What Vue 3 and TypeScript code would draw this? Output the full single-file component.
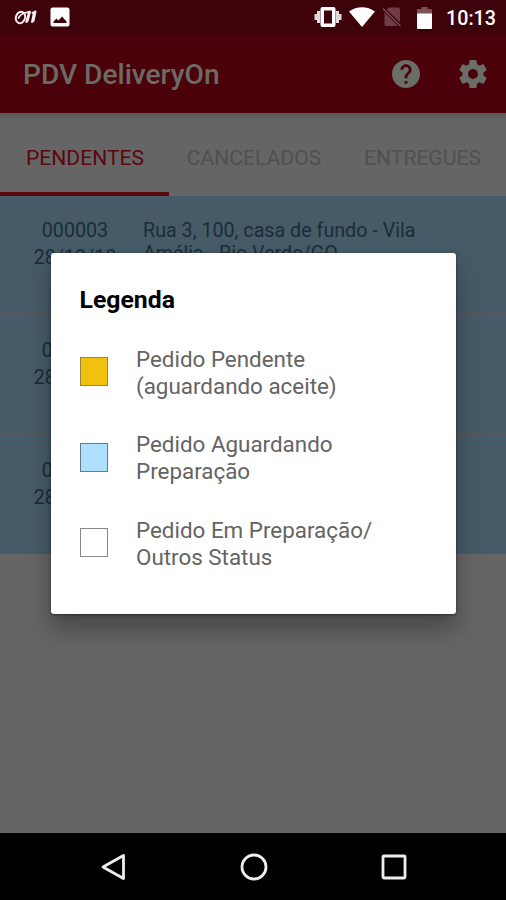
<script setup lang="ts">
interface Order { code: string; date: string; address: string }
interface LegendItem { tone: string; lines: string[] }

const tabs = ['PENDENTES', 'CANCELADOS', 'ENTREGUES']
const activeTab = 'PENDENTES'

const orders: Order[] = [
  { code: '000003', date: '28/12/18', address: 'Rua 3, 100, casa de fundo - Vila Amélia - Rio Verde/GO' },
  { code: '000002', date: '28/12/18', address: '' },
  { code: '000001', date: '28/12/18', address: '' },
]

const legend: LegendItem[] = [
  { tone: 'pending', lines: ['Pedido Pendente', '(aguardando aceite)'] },
  { tone: 'waiting', lines: ['Pedido Aguardando', 'Preparação'] },
  { tone: 'other', lines: ['Pedido Em Preparação/', 'Outros Status'] },
]
</script>

<template>
  <div class="screen">
    <div class="status">
      <svg class="brand" viewBox="0 0 24 18" fill="none" stroke="#f4eeee" stroke-width="2" stroke-linecap="round" stroke-linejoin="round">
        <ellipse cx="6.500" cy="9.500" rx="4.600" ry="5.800" transform="rotate(22 6.500 9.500)" />
        <path d="M4.500 10c1.500-3 4-4.500 7-5.500" stroke-width="1.700" />
        <path d="M12.300 14l2.700-9.500M13 4.500l3-.8-2.500 9.500M18 14l2-9.500M18.500 5l3-1.500-2 9.500" />
      </svg>
      <svg class="photo" viewBox="0 0 20 20">
        <rect x=".5" y=".5" width="19" height="19" rx="2" fill="#fff" />
        <path d="M3.500 16v-1.500l3-3 2 2 3.500-4 4.500 5V16z" fill="#3c020a" />
      </svg>
      <span class="grow"></span>
      <svg class="vibrate" viewBox="0 0 28 20" fill="#fff">
        <path fill-rule="evenodd" d="M8.500 0h11a2 2 0 0 1 2 2v16a2 2 0 0 1-2 2h-11a2 2 0 0 1-2-2V2a2 2 0 0 1 2-2zM10 3.500v13h8v-13z" />
        <path d="M3 4h3.200v12H3zM.5 7h2.700v6H.5zM21.800 4H25v12h-3.200zM24.800 7h2.700v6h-2.700z" opacity=".85" />
      </svg>
      <svg class="wifi" viewBox="0 0 26 20"><path d="M0 4.500C7.500-1.300 18.500-1.300 26 4.500L13 20z" fill="#fff" /></svg>
      <svg class="sim" viewBox="0 0 20 20">
        <path d="M7 .5h9.500a1.500 1.500 0 0 1 1.500 1.500v13.500L4.500 2.500zM2.500 5L16 19H4a1.500 1.500 0 0 1-1.500-1.500z" fill="#6f3c44" />
        <path d="M1 1.500l17.500 17.500" stroke="#7c4a51" stroke-width="1.500" />
      </svg>
      <svg class="battery" viewBox="0 0 15 22">
        <path d="M4.500 0h6v2H14a1 1 0 0 1 1 1v4H0V3a1 1 0 0 1 1-1h3.500z" fill="#805057" />
        <path d="M0 6.500h15V21a1 1 0 0 1-1 1H1a1 1 0 0 1-1-1z" fill="#fff" />
      </svg>
      <span class="clock">10:13</span>
    </div>

    <header class="bar">
      <h1>PDV DeliveryOn</h1>
      <svg class="help" viewBox="2 2 20 20" fill="#6b6d67">
        <path d="M12 2C6.480 2 2 6.480 2 12s4.480 10 10 10 10-4.480 10-10S17.520 2 12 2zm1 17h-2v-2h2v2zm2.070-7.750l-.9.920C13.450 12.900 13 13.500 13 15h-2v-.5c0-1.100.45-2.100 1.170-2.830l1.240-1.260c.37-.36.590-.86.590-1.410 0-1.100-.9-2-2-2s-2 .9-2 2H8c0-2.210 1.790-4 4-4s4 1.790 4 4c0 .88-.36 1.680-.93 2.250z" />
      </svg>
      <svg class="gear" viewBox="2 2 20 20" fill="#6b6d67">
        <path d="M19.430 12.980c.04-.32.070-.64.070-.98s-.03-.66-.07-.98l2.110-1.650c.19-.15.240-.42.120-.64l-2-3.460c-.12-.22-.39-.3-.61-.22l-2.490 1c-.52-.4-1.080-.73-1.690-.98l-.38-2.650C14.460 2.180 14.250 2 14 2h-4c-.25 0-.46.180-.49.420l-.38 2.650c-.61.250-1.170.590-1.690.98l-2.490-1c-.23-.09-.49 0-.61.220l-2 3.460c-.13.220-.07.490.12.640l2.110 1.650c-.04.320-.07.650-.07.980s.03.660.07.980l-2.110 1.650c-.19.150-.24.420-.12.640l2 3.460c.12.220.39.300.61.220l2.490-1c.52.400 1.080.730 1.690.98l.38 2.650c.03.240.24.420.49.420h4c.25 0 .46-.18.490-.42l.38-2.650c.61-.25 1.170-.59 1.690-.98l2.490 1c.23.090.49 0 .61-.22l2-3.460c.12-.22.070-.49-.12-.64l-2.110-1.650zM12 15.500c-1.930 0-3.500-1.570-3.500-3.500s1.570-3.500 3.500-3.500 3.500 1.570 3.500 3.500-1.570 3.500-3.500 3.500z" />
      </svg>
    </header>

    <nav class="tabs">
      <span v-for="tab in tabs" :key="tab" class="tab" :class="{ active: tab === activeTab }">{{ tab }}</span>
    </nav>

    <main class="content">
      <article v-for="order in orders" :key="order.code" class="order">
        <div class="ident"><span>{{ order.code }}</span><span>{{ order.date }}</span></div>
        <p class="address">{{ order.address }}</p>
      </article>
    </main>

    <footer class="nav">
      <svg viewBox="0 0 30 30"><path d="M4 15L24.500 3.500v23z" /></svg>
      <svg viewBox="0 0 30 30"><circle cx="15" cy="15" r="12" /></svg>
      <svg viewBox="0 0 30 30"><rect x="4" y="4" width="22" height="22" rx="1" /></svg>
    </footer>

    <section class="dialog" role="dialog">
      <h2>Legenda</h2>
      <div v-for="item in legend" :key="item.tone" class="entry">
        <i class="swatch" :class="item.tone"></i>
        <p><span v-for="line in item.lines" :key="line">{{ line }}</span></p>
      </div>
    </section>
  </div>
</template>

<style>
body { margin: 0; background: #656565; }
</style>

<style scoped>
* { box-sizing: border-box; }
h1, h2, p { margin: 0; }
svg { display: block; flex: none; }
.screen { position: relative; width: 506px; height: 900px; display: flex; flex-direction: column; overflow: hidden; background: #656565; font-family: Roboto, sans-serif; }
.status { height: 34px; flex: none; display: flex; align-items: center; padding: 0 9px 0 14px; background: #3d020a; }
.brand { width: 24px; height: 18px; }
.photo { width: 20px; height: 20px; margin-left: 11.500px; }
.grow { flex: 1; }
.vibrate { width: 28px; height: 20px; }
.wifi { width: 26px; height: 20px; margin-left: 7px; }
.sim { width: 20px; height: 20px; margin-left: 7px; }
.battery { width: 15px; height: 22px; margin: 2px 0 0 15px; }
.clock { width: 51px; margin: 3px 0 0 14px; color: #fff; font-size: 19.700px; font-weight: 500; line-height: 24px; white-space: nowrap; }
.bar { height: 79px; flex: none; display: flex; align-items: center; padding: 0 19px 0 23px; background: #4a010a; }
.bar h1 { flex: 1; padding-top: 3px; color: #6b6b64; font-size: 28.1px; font-weight: 500; line-height: 34px; white-space: nowrap; }
.help { width: 28px; height: 28px; }
.gear { width: 28px; height: 28px; margin-left: 39.500px; }
.tabs { height: 82.500px; flex: none; display: grid; grid-template-columns: 169px 169px 168px; background: linear-gradient(#595959, #656565 8px); }
.tab { display: flex; align-items: center; justify-content: center; padding: 11px 0 0 1px; border-bottom: 4px solid transparent; color: #505050; font-size: 21.100px; white-space: nowrap; }
.tab.active { color: #5c0710; border-bottom-color: #5a0710; }
.content { flex: 1; }
.order { height: 120px; display: flex; padding: 22px 0 0; background: #465b67; border-bottom: 1px solid #5c585c; color: #1b2c37; font-size: 19.700px; line-height: 27px; }
.order:first-child { height: 119px; padding-top: 21px; }
.order:last-child { height: 119.500px; border-bottom: 0; }
.ident { width: 143px; padding-left: 7px; display: flex; flex-direction: column; align-items: center; }
.address { width: 300px; line-height: 23px; padding-top: 2px; }
.nav { height: 67px; flex: none; display: flex; justify-content: space-between; align-items: center; padding: 0 97px 0 98.500px; background: #000; }
.nav svg { width: 30px; height: 30px; fill: none; stroke: #eee; stroke-width: 2.800; stroke-linejoin: round; }
.dialog { position: absolute; left: 51px; top: 253px; width: 405px; height: 361px; padding: 31px 28px 31px 28.500px; border-radius: 3px; background: #fff; box-shadow: 0 1px 3px rgba(0, 0, 0, .45), 0 15px 24px rgba(0, 0, 0, .3); }
.dialog h2 { color: #000; font-size: 24.800px; font-weight: 700; line-height: 32px; margin-bottom: 30px; }
.entry { display: flex; align-items: center; margin-bottom: 32px; }
.swatch { width: 28px; height: 29px; margin: 0 28.500px 2px 0; border: 1px solid #777; }
.pending { background: #f0c20e; border-color: #9c8539; }
.waiting { background: #b0e0ff; border-color: #607d90; }
.other { background: #fff; border-color: #888; }
.entry p { color: #646464; font-size: 22.400px; line-height: 26.700px; }
.entry span { display: block; white-space: nowrap; }
</style>
